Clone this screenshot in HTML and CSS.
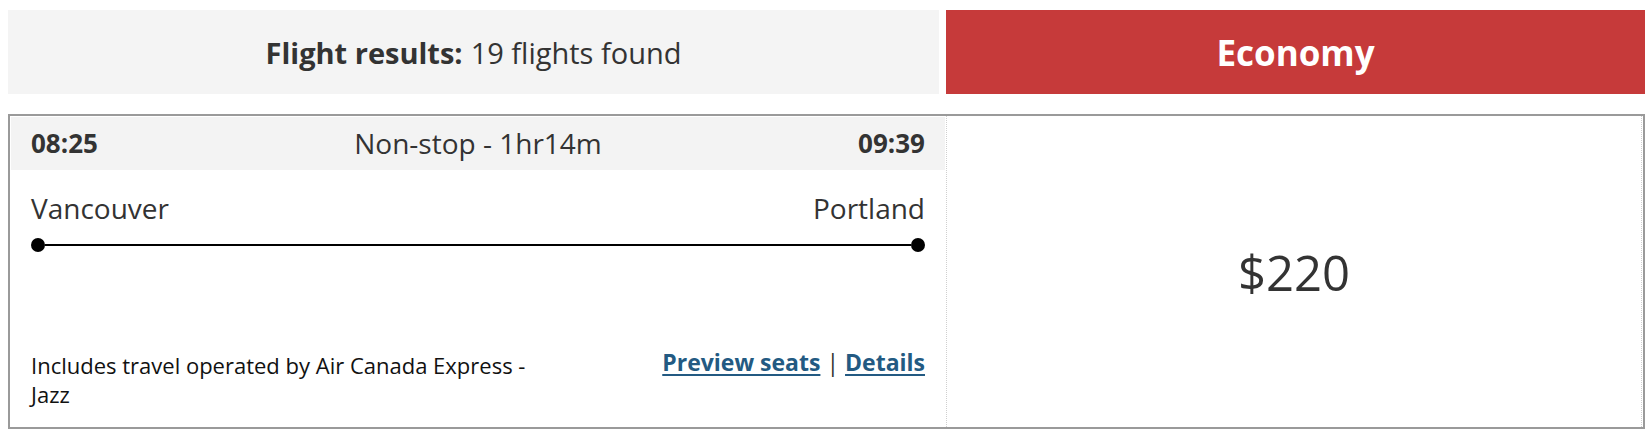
FILE: index.html
```html
<!DOCTYPE html>
<html lang="en">
<head>
    <meta charset="UTF-8">
    <meta name="viewport" content="width=device-width, initial-scale=1.0">
    <title>Flight results</title>
    <link rel="stylesheet" href="styles.css">
</head>
<body>
    <div class="results-head">
        <div class="results-title"><strong>Flight results:</strong> 19 flights found</div>
        <div class="cabin">Economy</div>
    </div>

    <div class="flight-card">
        <div class="flight-info">
            <div class="times-row">
                <span class="time">08:25</span>
                <span class="duration">Non-stop - 1hr14m</span>
                <span class="time time-end">09:39</span>
            </div>
            <div class="cities">
                <span>Vancouver</span>
                <span>Portland</span>
            </div>
            <div class="route">
                <span class="dot"></span>
                <span class="track"></span>
                <span class="dot"></span>
            </div>
            <div class="flight-foot">
                <p class="operator">Includes travel operated by Air Canada Express - Jazz</p>
                <div class="links">
                    <a href="#">Preview seats</a>
                    <span class="sep">|</span>
                    <a href="#">Details</a>
                </div>
            </div>
        </div>
        <div class="fare">$220</div>
    </div>
</body>
</html>
```

FILE: styles.css
```css
body {
    font-family: "Open Sans", Arial, sans-serif;
    margin: 0;
    padding: 10px 3px 8px 8px;
    background-color: #fff;
    color: #333;
}

.results-head {
    display: grid;
    grid-template-columns: 1fr 699px;
    gap: 7px;
    height: 84px;
}
.results-title {
    background-color: #f4f4f4;
    display: flex;
    align-items: center;
    justify-content: center;
    font-size: 29px;
}
.results-title strong {
    font-weight: 700;
    margin-right: 8px;
}
.cabin {
    background-color: #c63a3a;
    color: #fff;
    display: flex;
    align-items: center;
    justify-content: center;
    font-size: 35px;
    font-weight: 700;
}

.flight-card {
    margin-top: 20px;
    border: 2px solid #9a9a9a;
    display: grid;
    grid-template-columns: 1fr 697px;
}
.flight-info {
    padding: 1px 1px 18px 1px;
}
.times-row {
    background-color: #f3f3f3;
    display: grid;
    grid-template-columns: 1fr auto 1fr;
    align-items: center;
    padding: 10px 20px;
    line-height: 33px;
    font-size: 28px;
}
.time {
    font-size: 26px;
    font-weight: 700;
}
.time-end {
    text-align: right;
}
.cities {
    display: flex;
    justify-content: space-between;
    padding: 0 20px;
    margin-top: 20px;
    font-size: 28px;
    line-height: 36px;
}
.route {
    display: flex;
    align-items: center;
    padding: 0 20px;
    margin-top: 12px;
}
.dot {
    width: 14px;
    height: 14px;
    border-radius: 50%;
    background-color: #000;
}
.track {
    flex: 1;
    height: 2px;
    background-color: #000;
}
.flight-foot {
    display: flex;
    justify-content: space-between;
    align-items: flex-start;
    padding: 0 20px;
    margin-top: 99px;
}
.operator {
    margin: 0;
    width: 520px;
    font-size: 22px;
    line-height: 29px;
    color: #111;
}
.links {
    font-size: 23px;
    line-height: 29px;
    margin-top: -3px;
}
.links a {
    color: #235a82;
    font-weight: 700;
    text-decoration: underline;
    text-underline-offset: 3px;
}
.sep {
    color: #333;
}

.fare {
    border-left: 1px dotted #cfcfcf;
    border-right: 1px dotted #cfcfcf;
    margin-right: 1px;
    display: flex;
    align-items: center;
    justify-content: center;
    font-size: 49px;
}
```
